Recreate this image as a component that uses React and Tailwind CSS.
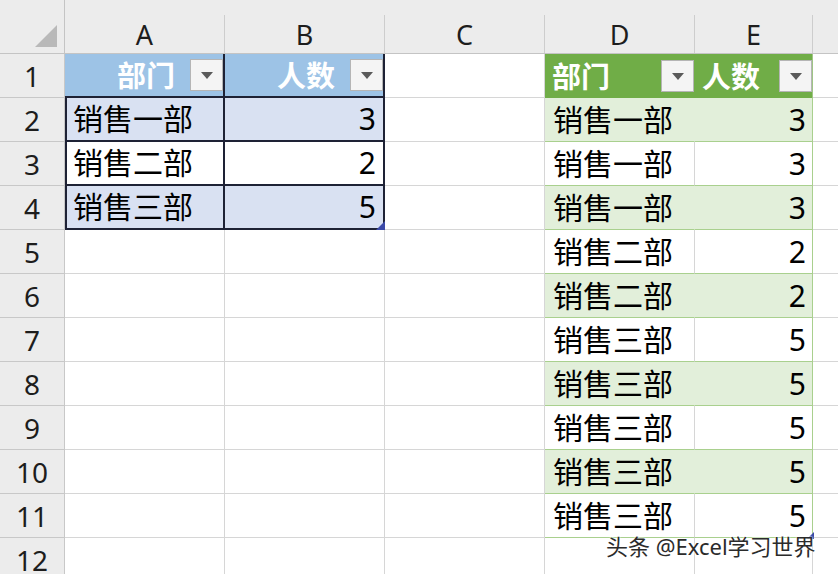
import React from "react";

const blueRows = [
  { dept: "销售一部", n: 3, band: true },
  { dept: "销售二部", n: 2, band: false },
  { dept: "销售三部", n: 5, band: true },
];

const greenRows = [
  { dept: "销售一部", n: 3 },
  { dept: "销售一部", n: 3 },
  { dept: "销售一部", n: 3 },
  { dept: "销售二部", n: 2 },
  { dept: "销售二部", n: 2 },
  { dept: "销售三部", n: 5 },
  { dept: "销售三部", n: 5 },
  { dept: "销售三部", n: 5 },
  { dept: "销售三部", n: 5 },
  { dept: "销售三部", n: 5 },
];

function FilterBtn() {
  return (
    <div className="w-[33px] h-[32px] shrink-0 bg-[#f4f4f4] border border-[#b5b5b5] flex items-center justify-center">
      <svg width="12" height="7" viewBox="0 0 12 7">
        <path d="M0 0h12L6 7z" fill="#5a5a5a" />
      </svg>
    </div>
  );
}

function Handle({ size = 9 }) {
  return (
    <svg
      className="absolute right-[-2px] bottom-[-2px]"
      width={size}
      height={size}
      viewBox="0 0 10 10"
    >
      <path d="M10 0V10H0z" fill="#3b4aa8" />
    </svg>
  );
}

export default function App() {
  const cells = [];

  // column header row
  cells.push(
    <div key="corner" className="bg-[#ececec] border-b border-r border-[#c4c4c4] relative">
      <svg className="absolute left-[35px] top-[25px]" width="22" height="22" viewBox="0 0 22 22">
        <path d="M22 0V22H0z" fill="#b9b9b9" />
      </svg>
    </div>
  );
  ["A", "B", "C", "D", "E", ""].forEach((c, i) => (
    cells.push(
      <div key={"h" + i} className="bg-[#ececec] border-b border-[#c4c4c4] flex items-end">
        <div className={`h-[38px] w-full flex items-center justify-center pt-[3px] text-[27px] text-[#1d1d1d] ${i < 5 ? "border-r border-[#cdcdcd]" : ""}`}>
          {c}
        </div>
      </div>
    )
  ));

  for (let r = 1; r <= 12; r++) {
    cells.push(
      <div key={"r" + r} className="bg-[#ececec] border-b border-r border-[#c8c8c8] flex items-center justify-center text-[28px] text-[#1d1d1d]">
        {r}
      </div>
    );

    // A & B
    if (r === 1) {
      cells.push(
        <div key="a1" className="bg-[#9dc3e6] border-r-2 border-b-2 border-[#1e2235] flex items-center justify-end gap-[15px]">
          <span className="text-[29px] font-bold text-white leading-none">部门</span>
          <FilterBtn />
        </div>
      );
      cells.push(
        <div key="b1" className="bg-[#9dc3e6] border-r-2 border-b-2 border-[#1e2235] flex items-center justify-end gap-[15px]">
          <span className="text-[29px] font-bold text-white leading-none">人数</span>
          <FilterBtn />
        </div>
      );
    } else if (r <= 4) {
      const row = blueRows[r - 2];
      const bg = row.band ? "bg-[#d9e1f2]" : "bg-white";
      cells.push(
        <div key={"a" + r} className={`${bg} border-r-2 border-b-2 border-[#1e2235] shadow-[inset_2px_0_0_#1e2235] flex items-center pl-[8px] text-[30px] text-black leading-none`}>
          {row.dept}
        </div>
      );
      cells.push(
        <div key={"b" + r} className={`${bg} relative border-r-2 border-b-2 border-[#1e2235] flex items-center justify-end pr-[7px] text-[30px] text-black leading-none`}>
          {row.n}
          {r === 4 && <Handle />}
        </div>
      );
    } else {
      cells.push(<div key={"a" + r} className="border-r border-b border-[#d6d6d6]" />);
      cells.push(<div key={"b" + r} className="border-r border-b border-[#d6d6d6]" />);
    }

    // C
    cells.push(<div key={"c" + r} className="border-r border-b border-[#d6d6d6]" />);

    // D & E
    if (r === 1) {
      cells.push(
        <div key="d1" className="bg-[#70ad47] flex items-center justify-between pl-[7px] pr-[1px]">
          <span className="text-[29px] font-bold text-white leading-none">部门</span>
          <FilterBtn />
        </div>
      );
      cells.push(
        <div key="e1" className="bg-[#70ad47] border-r border-[#9fc585] flex items-center justify-between pl-[7px]">
          <span className="text-[29px] font-bold text-white leading-none">人数</span>
          <FilterBtn />
        </div>
      );
    } else if (r <= 11) {
      const row = greenRows[r - 2];
      const band = r % 2 === 0;
      cells.push(
        <div
          key={"d" + r}
          className={`${band ? "bg-[#e2efda] border-r-[#e2efda]" : "bg-white border-r-[#d6d6d6]"} border-r border-b border-b-[#a9d08e] flex items-center pl-[8px] text-[30px] text-black leading-none`}
        >
          {row.dept}
        </div>
      );
      cells.push(
        <div
          key={"e" + r}
          className={`${band ? "bg-[#e2efda]" : "bg-white"} relative border-r border-b border-[#a9d08e] flex items-center justify-end pr-[6px] text-[30px] text-black leading-none`}
        >
          {row.n}
          {r === 11 && <Handle size={7} />}
        </div>
      );
    } else {
      cells.push(<div key={"d" + r} className="border-r border-b border-[#d6d6d6]" />);
      cells.push(<div key={"e" + r} className="border-r border-b border-[#d6d6d6]" />);
    }

    // F
    cells.push(<div key={"f" + r} className="border-b border-[#d6d6d6]" />);
  }

  return (
    <div className="w-[838px] h-[574px] overflow-hidden bg-white relative font-['Noto_Sans','Noto_Sans_CJK_SC',sans-serif]">
      <div className="grid grid-cols-[65px_160px_160px_160px_150px_118px_1fr] grid-rows-[54px_repeat(12,44px)]">
        {cells}
      </div>
      <div className="absolute left-[606px] top-[535px] text-[22px] leading-none text-[#2b2b2b] [text-shadow:0_0_2px_#fff,0_0_2px_#fff] whitespace-nowrap">
        头条 @Excel学习世界
      </div>
    </div>
  );
}
